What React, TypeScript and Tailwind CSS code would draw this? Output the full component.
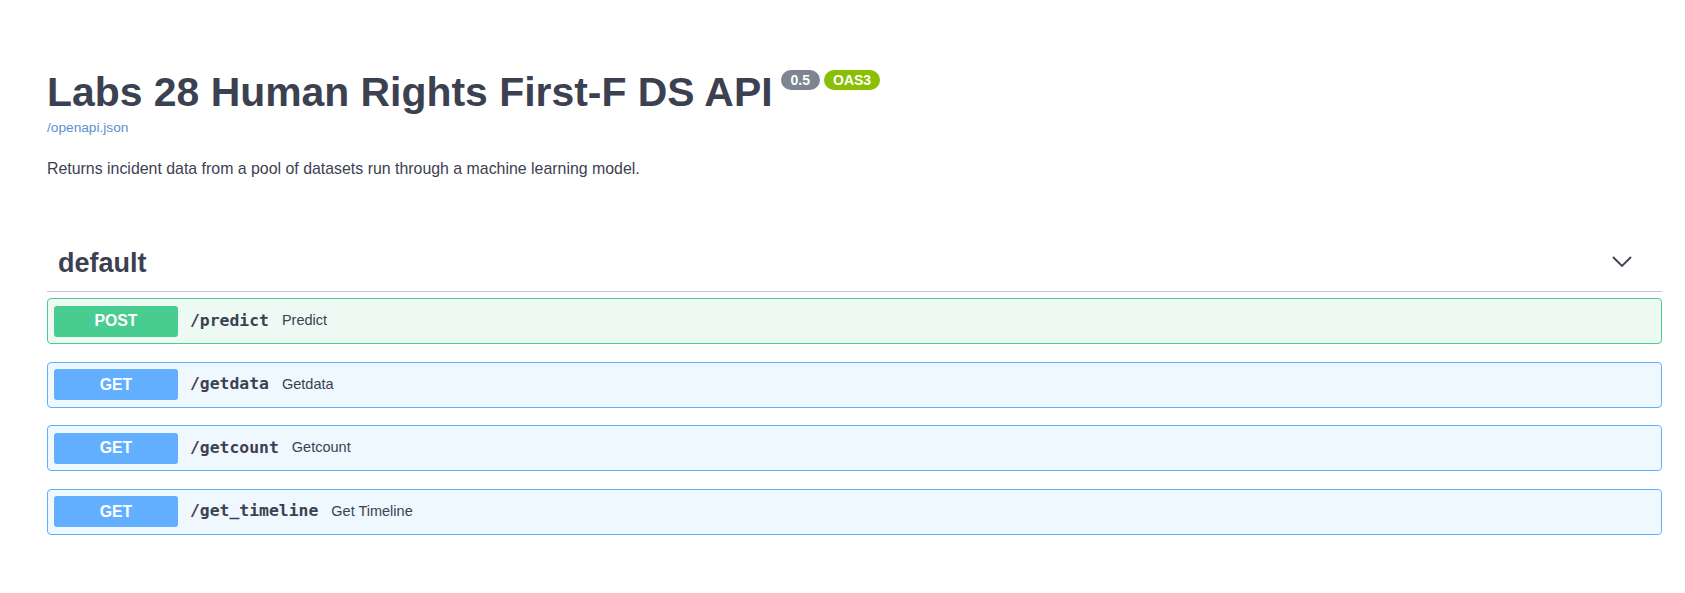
const endpoints = [
  { method: "POST", path: "/predict", summary: "Predict" },
  { method: "GET", path: "/getdata", summary: "Getdata" },
  { method: "GET", path: "/getcount", summary: "Getcount" },
  { method: "GET", path: "/get_timeline", summary: "Get Timeline" },
];

function Opblock({ method, path, summary }: { method: string; path: string; summary: string }) {
  const isPost = method === "POST";
  return (
    <div
      className={`flex items-center h-[46px] mb-[17.5px] px-[6px] rounded-[4px] border ${
        isPost ? "bg-[#edfaf4] border-[#49cc90]" : "bg-[#eff7ff] border-[#61affe]"
      }`}
    >
      <span
        className={`flex items-center justify-center w-[124px] h-[31px] rounded-[3px] text-white font-bold text-[15.8px] ${
          isPost ? "bg-[#49cc90]" : "bg-[#61affe]"
        }`}
      >
        {method}
      </span>
      <span className="ml-[12px] font-['DejaVu_Sans_Mono',monospace] font-bold text-[16.4px] text-[#3b4151]">{path}</span>
      <span className="ml-[13px] text-[14.5px] text-[#3b4151]">{summary}</span>
    </div>
  );
}

export default function App() {
  return (
    <div className="min-h-screen bg-white font-['Liberation_Sans',Arial,sans-serif] text-[#3b4151]">
      <div className="pl-[47px] pr-[23px] pt-[68px]">
        {/* info */}
        <div className="flex items-start">
          <h1 className="text-[40.9px] leading-[48px] font-bold">Labs 28 Human Rights First-F DS API</h1>
          <span className="ml-[8px] mt-[2px] h-[20px] px-[10px] rounded-full bg-[#7d8492] text-white text-[14px] font-bold leading-[20px]">
            0.5
          </span>
          <span className="ml-[4px] mt-[2px] h-[20px] px-[9px] rounded-full bg-[#89bf04] text-white text-[14px] font-bold leading-[20px]">
            OAS3
          </span>
        </div>
        <a className="block mt-[2px] text-[13.7px] leading-[20px] text-[#5b8fd2]">/openapi.json</a>
        <p className="mt-[21px] text-[15.9px] leading-[20px]">
          Returns incident data from a pool of datasets run through a machine learning model.
        </p>

        {/* tag section */}
        <div className="mt-[66px]">
          <div className="flex items-start justify-between pl-[11px] pr-[30px] pb-[10px] border-b border-[#c4c6cb]">
            <h3 className="text-[27px] leading-[36px] font-bold">default</h3>
            <svg width="20" height="11" viewBox="0 0 20 11" className="mt-[11px]">
              <polyline points="1,1 10,10 19,1" fill="none" stroke="#3b4151" strokeWidth="1.8" />
            </svg>
          </div>
          <div className="mt-[6px]">
            {endpoints.map((e) => (
              <Opblock key={e.path} {...e} />
            ))}
          </div>
        </div>
      </div>
    </div>
  );
}
